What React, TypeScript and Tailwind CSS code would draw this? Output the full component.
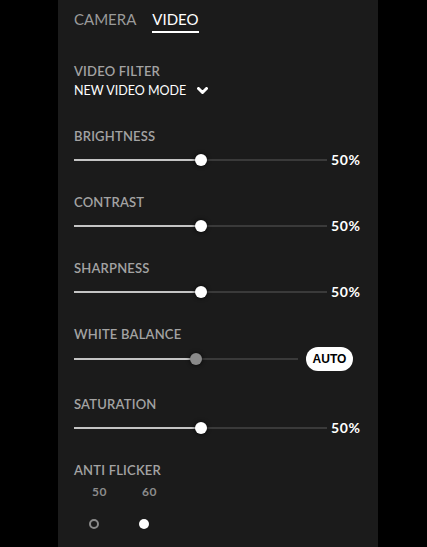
import React from 'react'

const FONT = { fontFamily: 'Lato, "Open Sans", sans-serif' }

function Label({ children }: { children: React.ReactNode }) {
  return (
    <div className="h-4 text-[13px] leading-4 font-semibold tracking-[0.2px] text-[#a3a3a3]">
      {children}
    </div>
  )
}

function Track({ pct, width, muted }: { pct: number; width?: string; muted?: boolean }) {
  return (
    <div className={`relative h-5 ${width ?? 'flex-1'}`}>
      <div className="absolute left-0 right-0 top-[9px] h-[2px] bg-[#3a3a3a]" />
      <div className="absolute left-0 top-[9px] h-[2px] bg-[#c4c4c4]" style={{ width: `${pct}%` }} />
      <div
        className={`absolute top-1 h-3 w-3 -translate-x-1/2 rounded-full shadow-[0_0_4px_rgba(0,0,0,0.8)] ${
          muted ? 'bg-[#8a8a8a]' : 'bg-white'
        }`}
        style={{ left: `${pct}%` }}
      />
    </div>
  )
}

function SliderSection({ label, value }: { label: string; value: number }) {
  return (
    <div>
      <Label>{label}</Label>
      <div className="mt-[6px] flex items-center">
        <Track pct={value} />
        <span className="ml-1 w-[31px] text-[14px] leading-5 font-bold tracking-[0.6px] text-white">{value}%</span>
      </div>
    </div>
  )
}

export default function App() {
  return (
    <div className="min-h-screen bg-black" style={FONT}>
      <div className="ml-[58px] min-h-screen w-[320px] bg-[#1b1b1b] px-4">
        <div className="flex gap-4 pt-[9px]">
          <div className="text-[15px] leading-5 text-[#9a9a9a]">CAMERA</div>
          <div className="flex flex-col">
            <div className="text-[15px] leading-5 text-white">VIDEO</div>
            <div className="mt-[2px] h-[2px] bg-white" />
          </div>
        </div>

        <div className="mt-[30px]">
          <Label>VIDEO FILTER</Label>
          <div className="mt-1 flex h-4 items-center text-[12.5px] leading-4 text-white">
            NEW VIDEO MODE
            <svg className="ml-[11px]" width="11" height="8" viewBox="0 0 11 8">
              <polyline points="1.5,1.5 5.5,5.5 9.5,1.5" fill="none" stroke="white" strokeWidth="3" strokeLinecap="round" strokeLinejoin="round" />
            </svg>
          </div>
        </div>

        <div className="mt-[29px] flex flex-col gap-6">
          <SliderSection label="BRIGHTNESS" value={50} />
          <SliderSection label="CONTRAST" value={50} />
          <SliderSection label="SHARPNESS" value={50} />
          <div className="pb-[1px]">
            <Label>WHITE BALANCE</Label>
            <div className="mt-[5px] flex h-6 items-center">
              <Track pct={54.5} width="w-[224px]" muted />
              <button className="ml-2 h-6 w-[47px] rounded-full bg-white text-[12px] font-bold text-black" style={{ fontFamily: '"Liberation Sans", Arial, sans-serif' }}>
                AUTO
              </button>
            </div>
          </div>
          <SliderSection label="SATURATION" value={50} />
          <div>
            <Label>ANTI FLICKER</Label>
            <div className="mt-[6px] flex">
              {[
                { v: '50', on: false },
                { v: '60', on: true },
              ].map((o) => (
                <div key={o.v} className="flex w-[50px] flex-col">
                  <span className="ml-[18px] text-[12px] leading-4 font-bold tracking-[0.5px] text-[#8c8c8c]">{o.v}</span>
                  <span
                    className={`ml-[15px] mt-[19px] h-[10px] w-[10px] rounded-full ${
                      o.on ? 'bg-white' : 'border-2 border-[#8a8a8a]'
                    }`}
                  />
                </div>
              ))}
            </div>
          </div>
        </div>
      </div>
    </div>
  )
}
